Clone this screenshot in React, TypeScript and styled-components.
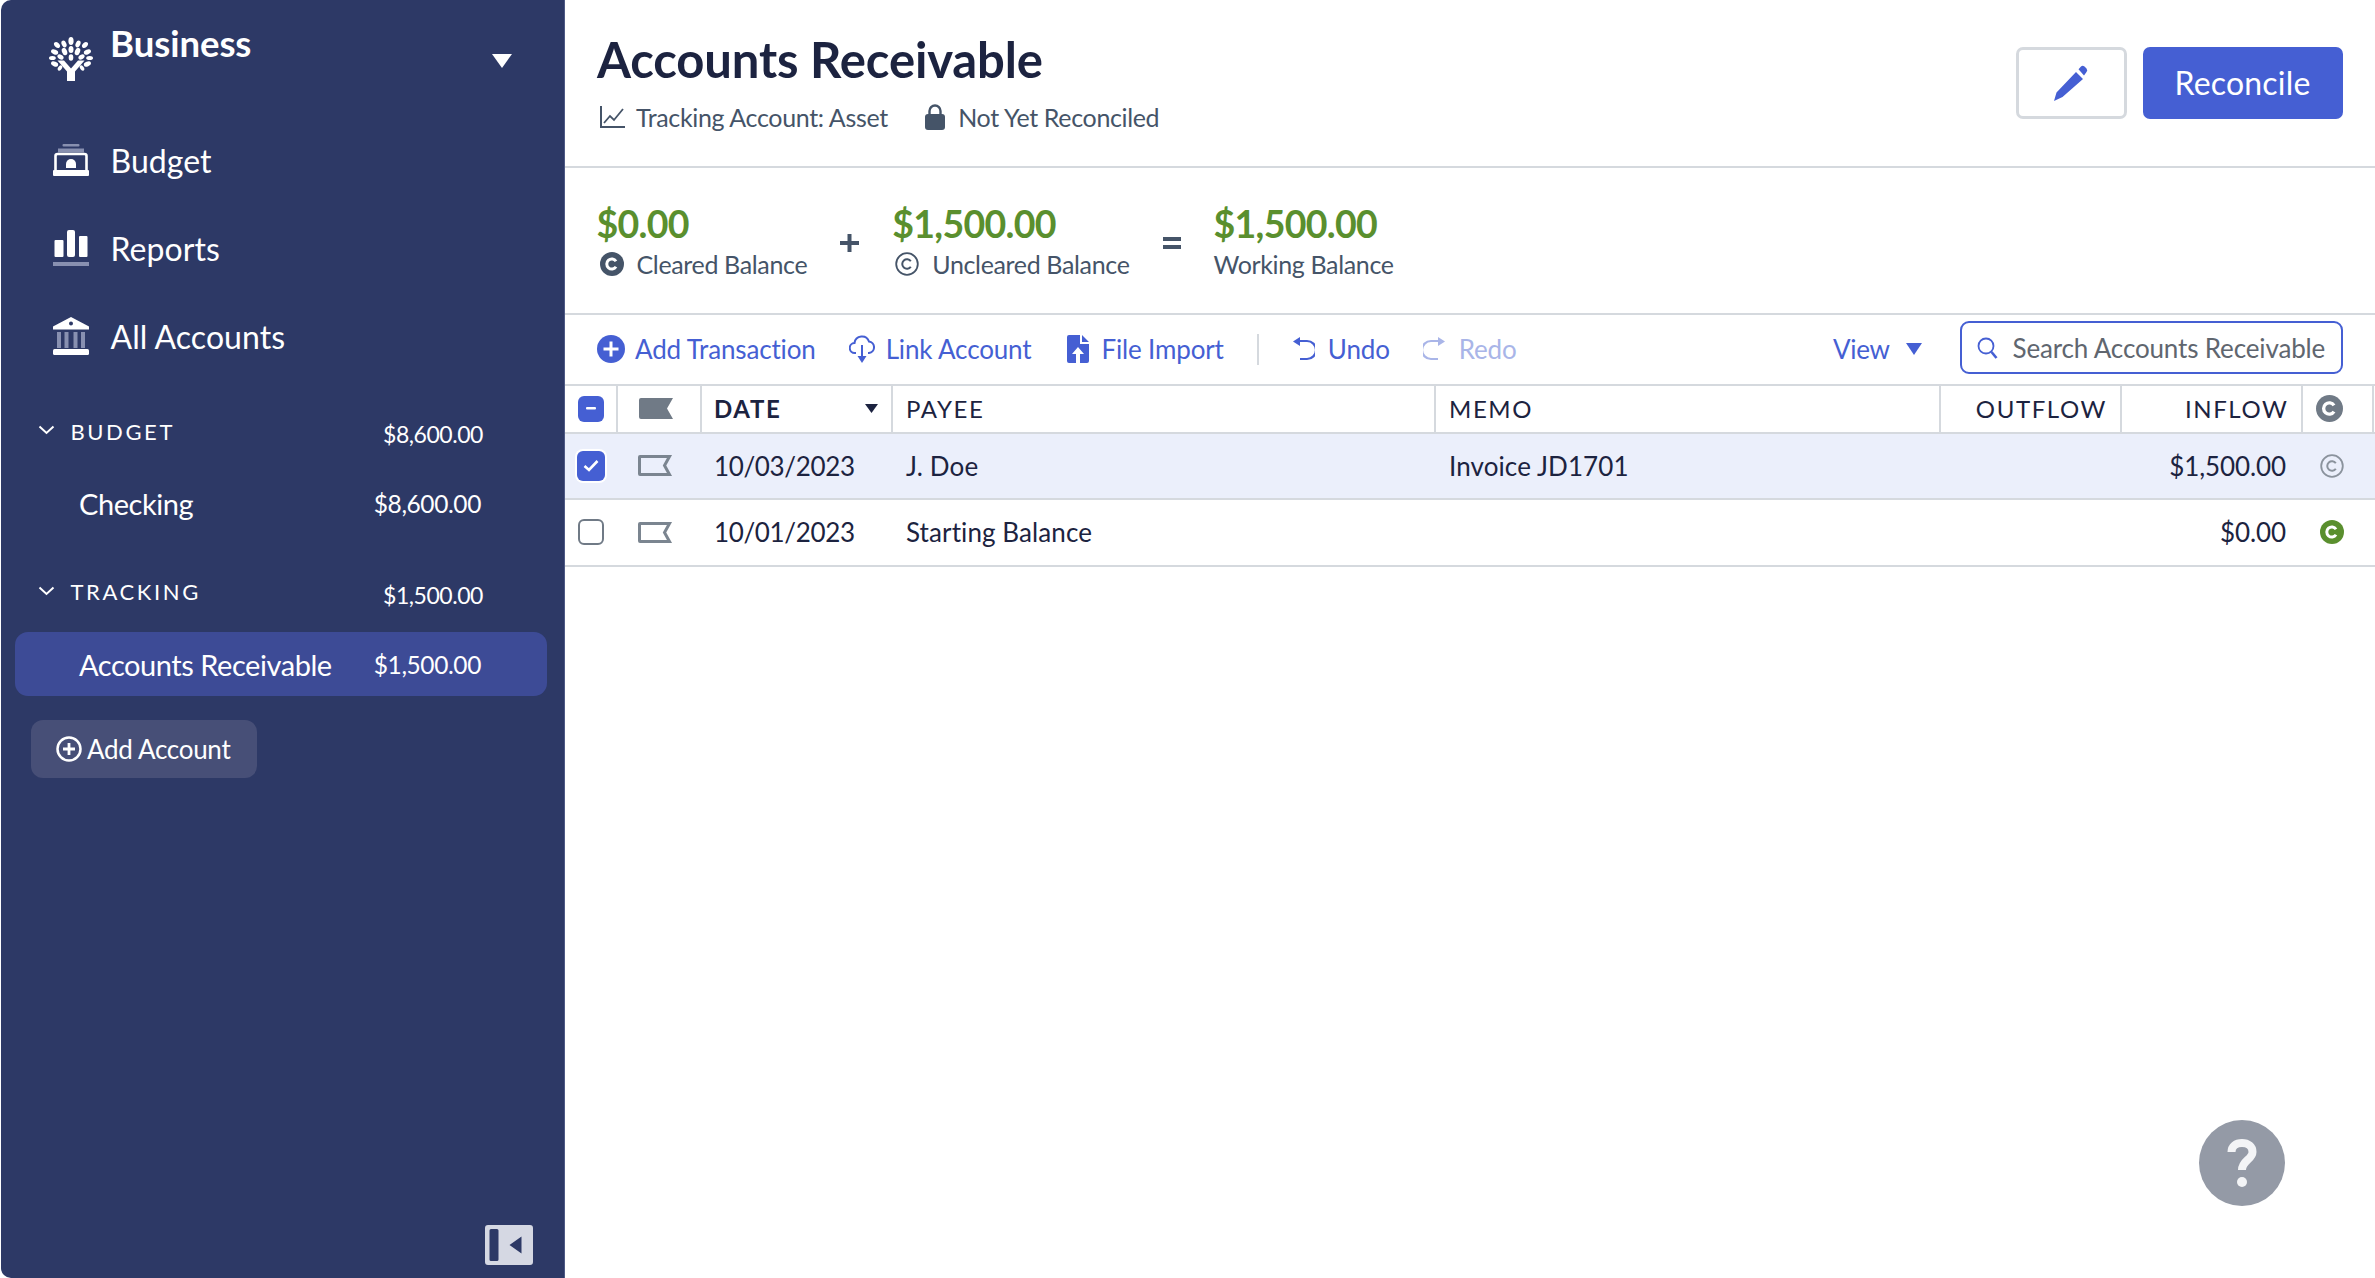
import React from "react";
import styled, { createGlobalStyle } from "styled-components";

const Global = createGlobalStyle`
  html, body { margin: 0; padding: 0; background: #fff; }
  body { font-family: "Lato", "Liberation Sans", sans-serif; color: #1c2340; }
  * { box-sizing: border-box; }
`;

const BLUE = "#455fd3";
const LINE = "#d5d9de";
const INK = "#1c2340";
const SLATE = "#455468";
const GREEN = "#5a8f2e";

const Page = styled.div`
  display: flex;
  width: 2375px;
  height: 1278px;
  overflow: hidden;
  position: relative;
  background: #fff;
`;

const Sidebar = styled.aside`
  width: 564px;
  margin-left: 1px;
  flex: none;
  display: flex;
  flex-direction: column;
  background: #2d3966;
  border-right: 1px solid #4f5a85;
  border-radius: 10px 0 0 10px;
  color: #fff;
`;

const Brand = styled.div`
  display: flex;
  height: 116px;
  padding: 37px 52px 0 48px;
`;
const BrandName = styled.div`
  margin-left: 17px;
  margin-top: -16px;
  font-size: 36.5px;
  font-weight: 700;
  line-height: 44px;
  letter-spacing: -0.05px;
`;
const BrandCaret = styled.svg`
  margin-left: auto;
  margin-top: 17px;
`;
const NavItem = styled.div`
  display: flex;
  align-items: center;
  height: 88px;
  padding-left: 52px;
  gap: 21.5px;
  font-size: 32px;
  letter-spacing: 0.05px;
`;
const GroupHead = styled.div<{ $top: number }>`
  display: flex;
  align-items: center;
  height: 48px;
  margin-top: ${(p) => p.$top}px;
  padding: 0 81px 0 37px;
`;
const GroupChevron = styled.svg`
  margin-top: -6px;
`;
const GroupLabel = styled.span`
  margin-left: 15.5px;
  margin-top: -4px;
  font-size: 22px;
  letter-spacing: 2.6px;
`;
const GroupAmount = styled.span`
  margin-left: auto;
  margin-top: 2px;
  font-size: 23px;
  letter-spacing: -0.45px;
`;
const AccountRow = styled.div<{ $active?: boolean }>`
  display: flex;
  align-items: center;
  justify-content: space-between;
  height: 64px;
  margin: 14.5px 17px 0 14px;
  padding: 0 66px 0 64px;
  border-radius: 13px;
  background: ${(p) => (p.$active ? "#3d4b96" : "transparent")};
  font-size: 29px;
  letter-spacing: -0.45px;
`;
const AccountAmount = styled.span`
  font-size: 24.5px;
  letter-spacing: -0.4px;
`;
const AddAccount = styled.button`
  display: flex;
  align-items: center;
  gap: 5px;
  align-self: flex-start;
  width: 226px;
  height: 58px;
  margin: 24px 0 0 30px;
  padding: 0 0 0 25px;
  border: 0;
  border-radius: 12px;
  background: #474f77;
  color: #fff;
  font-family: inherit;
  font-size: 26px;
  letter-spacing: -0.3px;
`;
const Collapse = styled.svg`
  margin-top: auto;
  margin-bottom: 13px;
  margin-right: 31.5px;
  align-self: flex-end;
`;

const Main = styled.main`
  flex: 1;
  min-width: 0;
  display: flex;
  flex-direction: column;
`;
const Header = styled.header`
  display: flex;
  justify-content: space-between;
  height: 168px;
  padding: 0 32.5px 0 32px;
  border-bottom: 2px solid ${LINE};
`;
const Title = styled.h1`
  margin: 30px 0 0;
  font-size: 49px;
  line-height: 58px;
  font-weight: 700;
  letter-spacing: -0.15px;
  color: ${INK};
`;
const Meta = styled.div`
  display: flex;
  align-items: center;
  margin-top: 14px;
  padding-left: 3px;
  color: ${SLATE};
  font-size: 25px;
  letter-spacing: -0.35px;
`;
const MetaItem = styled.span<{ $gap: number }>`
  display: flex;
  align-items: center;
  gap: ${(p) => p.$gap}px;
  margin-right: 37.5px;
`;
const HeaderActions = styled.div`
  display: flex;
  gap: 16px;
  padding-top: 47px;
`;
const EditButton = styled.button`
  display: flex;
  align-items: center;
  justify-content: center;
  width: 111px;
  height: 72px;
  background: #fff;
  border: 3.5px solid ${LINE};
  border-radius: 7px;
`;
const ReconcileButton = styled.button`
  width: 200px;
  height: 72px;
  padding: 0 0 2px;
  border: 0;
  border-radius: 7px;
  background: ${BLUE};
  color: #fff;
  font-family: inherit;
  font-size: 32px;
  letter-spacing: 0.2px;
`;

const Balances = styled.section`
  display: flex;
  align-items: flex-start;
  height: 147px;
  padding: 32.5px 0 0 31.500px;
  border-bottom: 2px solid ${LINE};
`;
const Balance = styled.div`
  display: flex;
  flex-direction: column;
`;
const Amount = styled.div`
  font-size: 37.5px;
  line-height: 46px;
  font-weight: 700;
  letter-spacing: -0.7px;
  color: ${GREEN};
`;
const BalanceLabel = styled.div`
  display: flex;
  align-items: center;
  gap: 13px;
  margin-top: 2.5px;
  font-size: 25px;
  line-height: 30px;
  letter-spacing: -0.35px;
  color: ${SLATE};
`;
const LabelIcon = styled.span`
  display: flex;
  margin-left: 3px;
`;
const Operator = styled.svg`
  margin: 33px 33px 0 33px;
`;

const Toolbar = styled.section`
  display: flex;
  align-items: center;
  height: 68.5px;
  padding: 0 32.5px 0 32px;
  color: ${BLUE};
  font-size: 26px;
  letter-spacing: -0.15px;
`;
const ToolItem = styled.span<{ $gap: number; $off?: boolean; $after: number }>`
  display: flex;
  align-items: center;
  gap: ${(p) => p.$gap}px;
  margin-right: ${(p) => p.$after}px;
  color: ${(p) => (p.$off ? "#a9b5e8" : BLUE)};
`;
const ToolDivider = styled.span`
  width: 2px;
  height: 31px;
  margin-right: 32px;
  background: ${LINE};
`;
const ViewMenu = styled.span`
  display: flex;
  align-items: center;
  gap: 16px;
  margin-left: auto;
  margin-right: 38px;
  letter-spacing: -0.35px;
`;
const SearchBox = styled.div`
  display: flex;
  align-items: center;
  gap: 15px;
  width: 383px;
  height: 53px;
  margin-top: -3px;
  padding-left: 15px;
  border: 2px solid ${BLUE};
  border-radius: 9px;
  font-size: 26px;
  letter-spacing: -0.15px;
  color: #60666f;
  white-space: nowrap;
`;

const columns = "53px 84px 191px 543px 505px 180.5px 181.5px 71px 1px";
const Row = styled.div<{ $selected?: boolean; $head?: boolean }>`
  display: grid;
  grid-template-columns: ${columns};
  height: ${(p) => (p.$head ? 50 : 66.5)}px;
  border-top: ${(p) => (p.$head ? `2px solid ${LINE}` : "0")};
  border-bottom: 2px solid ${LINE};
  background: ${(p) => (p.$selected ? "#ebeffb" : "#fff")};
`;
const HeadCell = styled.div<{ $right?: boolean; $bold?: boolean; $iconAt?: number }>`
  display: flex;
  align-items: center;
  justify-content: ${(p) => (p.$right ? "flex-end" : "flex-start")};
  padding: ${(p) => (p.$right ? "0 12.5px 0 0" : p.$iconAt !== undefined ? `0 0 0 ${p.$iconAt}px` : p.$bold ? "0 13px 0 12px" : "0 13px")};
  border-right: 2px solid ${LINE};
  font-size: 24px;
  font-weight: ${(p) => (p.$bold ? 700 : 400)};
  letter-spacing: 1.6px;
  color: ${INK};
`;
const Cell = styled.div<{ $right?: boolean; $iconAt?: number; $date?: boolean }>`
  display: flex;
  align-items: center;
  justify-content: ${(p) => (p.$right ? "flex-end" : "flex-start")};
  padding: ${(p) => (p.$right ? "0 17px 0 0" : p.$iconAt !== undefined ? `0 0 0 ${p.$iconAt}px` : p.$date ? "0 12px" : "0 13px")};
  font-size: 26px;
  letter-spacing: ${(p) => (p.$date ? "-0.35px" : p.$right ? "-0.1px" : "0.1px")};
  color: ${INK};
`;
const DateSort = styled.svg`
  margin-left: auto;
`;
const CheckBox = styled.span<{ $on?: boolean; $head?: boolean }>`
  display: flex;
  align-items: center;
  justify-content: center;
  width: ${(p) => (p.$on && !p.$head ? 28 : 26)}px;
  height: ${(p) => (p.$on && !p.$head ? 30 : 26)}px;
  margin-left: ${(p) => (p.$on && !p.$head ? -1 : 0)}px;
  border-radius: 6px;
  background: ${(p) => (p.$on ? BLUE : "#fff")};
  border: ${(p) => (p.$on ? "0" : "2px solid #707a86")};
  box-shadow: ${(p) => (p.$on && !p.$head ? "0 0 0 2px #fff" : "none")};
`;
const Help = styled.div`
  position: absolute;
  left: 2199px;
  top: 1120px;
  display: flex;
  align-items: center;
  justify-content: center;
  width: 86px;
  height: 86px;
  border-radius: 50%;
  background: #949aa6;
`;

const Logo = () => {
  const leaves: [number, number, number, number, number][] = [
    [22, 4, 2.6, 4, 0], [15, 7, 2.3, 3.5, -25], [29, 7, 2.3, 3.5, 25], [8, 8, 2.3, 3.5, -45], [36, 8, 2.3, 3.5, 45],
    [5.6, 15, 2.4, 3.7, -68], [38.4, 15, 2.4, 3.7, 68], [3.4, 21, 2.1, 3.4, 90], [40.6, 21, 2.1, 3.4, 90],
    [5.6, 27, 2.3, 3.7, 112], [38.4, 27, 2.3, 3.7, 68], [11, 31, 1.9, 2.9, 35], [33, 31, 1.9, 2.9, -35],
    [22, 12.5, 2.5, 3.5, 0], [15.5, 14.5, 2.5, 3.9, -22], [28.5, 14.5, 2.5, 3.9, 22], [11.5, 20, 2.2, 3.3, -60],
    [32.5, 20, 2.2, 3.3, 60], [22, 20.5, 2.3, 3.3, 0],
  ];
  return (
    <svg width="44" height="44" viewBox="0 0 44 44" fill="#fff" aria-hidden>
      {leaves.map(([x, y, rx, ry, r], i) => (
        <ellipse key={i} cx={x} cy={y} rx={rx} ry={ry} transform={`rotate(${r} ${x} ${y})`} />
      ))}
      <path d="M8.500 23.500h6.500l7 8 7-8h6.500l-9.500 11V44h-8v-9.500z" />
    </svg>
  );
};

const BudgetIcon = () => (
  <svg width="36" height="32" viewBox="0 0 36 32" fill="none" aria-hidden>
    <rect x="9.500" width="17" height="2.500" rx="1" fill="#8890b0" />
    <rect x="5" y="4.500" width="26" height="4" fill="#8890b0" />
    <path d="M2.500 26v-14q0-2 2-2h27q2 0 2 2v14" stroke="#fff" strokeWidth="2.600" />
    <path d="M13 24v-4a5 5 0 0 1 10 0v4z" fill="#fff" />
    <rect y="26" width="36" height="6" rx="1" fill="#fff" />
  </svg>
);
const ReportsIcon = () => (
  <svg width="36" height="36" viewBox="0 0 36 36" aria-hidden>
    <rect x="1.500" y="10" width="9" height="17" rx="1" fill="#fff" />
    <rect x="14" width="8" height="27" rx="2" fill="#fff" />
    <rect x="26" y="6" width="8.500" height="21" rx="1" fill="#fff" />
    <rect y="32" width="36" height="4" fill="#8890b0" />
  </svg>
);
const BankIcon = () => (
  <svg width="36" height="38" viewBox="0 0 36 38" aria-hidden>
    <path fillRule="evenodd" d="M18 0 36 9.500v3H0v-3zM18 4.500a2 2 0 1 0 0 4 2 2 0 0 0 0-4z" fill="#fff" />
    <path d="M4 15h4v16H4zM11.500 15h4v16h-4zM20.500 15h4v16h-4zM28 15h4v16h-4z" fill="#8890b0" />
    <rect y="32" width="36" height="6" rx="1.500" fill="#fff" />
  </svg>
);
const Chevron = () => (
  <GroupChevron width="17" height="10" viewBox="0 0 17 10" fill="none" aria-hidden>
    <path d="M1.500 1.500 8.500 8l7-6.500" stroke="#fff" strokeWidth="2" />
  </GroupChevron>
);
const Cleared = ({ color, size }: { color: string; size: number }) => (
  <svg width={size} height={size} viewBox="0 0 24 24" aria-hidden>
    <circle cx="12" cy="12" r="12" fill={color} />
    <path d="M16 9.300a5 5 0 1 0 0 5.400" fill="none" stroke="#fff" strokeWidth="3" />
  </svg>
);
const Uncleared = ({ color, size }: { color: string; size: number }) => (
  <svg width={size} height={size} viewBox="0 0 24 24" aria-hidden>
    <circle cx="12" cy="12" r="10.800" fill="none" stroke={color} strokeWidth="1.800" />
    <path d="M15.800 9.300a4.700 4.700 0 1 0 0 5.400" fill="none" stroke={color} strokeWidth="2" />
  </svg>
);
const FlagShape = ({ filled }: { filled?: boolean }) =>
  filled ? (
    <svg width="34" height="21" viewBox="0 0 34 21" aria-hidden>
      <path d="M2 0h32l-6 10.500 6 10.500H2q-2 0-2-2V2q0-2 2-2z" fill="#707a86" />
    </svg>
  ) : (
    <svg width="35" height="21" viewBox="0 0 35 21" aria-hidden>
      <path d="M2 1.500h29.500l-5 9 5 9H2q-.5 0-.5-.5V2q0-.5.5-.5z" fill="none" stroke="#7b8590" strokeWidth="3" />
    </svg>
  );

const rows = [
  { date: "10/03/2023", payee: "J. Doe", memo: "Invoice JD1701", inflow: "$1,500.00", selected: true },
  { date: "10/01/2023", payee: "Starting Balance", memo: "", inflow: "$0.00", selected: false },
];

export default function App() {
  return (
    <Page>
      <Global />
      <Sidebar>
        <Brand>
          <Logo />
          <BrandName>Business</BrandName>
          <BrandCaret width="20" height="14" viewBox="0 0 20 14" aria-hidden>
            <path d="M0 0h20L10 14z" fill="#fff" />
          </BrandCaret>
        </Brand>
        <NavItem><BudgetIcon />Budget</NavItem>
        <NavItem><ReportsIcon />Reports</NavItem>
        <NavItem><BankIcon />All Accounts</NavItem>
        <GroupHead $top={29}>
          <Chevron />
          <GroupLabel>BUDGET</GroupLabel>
          <GroupAmount>$8,600.00</GroupAmount>
        </GroupHead>
        <AccountRow>
          <span>Checking</span>
          <AccountAmount>$8,600.00</AccountAmount>
        </AccountRow>
        <GroupHead $top={34}>
          <Chevron />
          <GroupLabel>TRACKING</GroupLabel>
          <GroupAmount>$1,500.00</GroupAmount>
        </GroupHead>
        <AccountRow $active>
          <span>Accounts Receivable</span>
          <AccountAmount>$1,500.00</AccountAmount>
        </AccountRow>
        <AddAccount>
          <svg width="26" height="26" viewBox="0 0 26 26" fill="none" aria-hidden>
            <circle cx="13" cy="13" r="11.500" stroke="#fff" strokeWidth="2.500" />
            <path d="M13 7v12M7 13h12" stroke="#fff" strokeWidth="2.800" />
          </svg>
          Add Account
        </AddAccount>
        <Collapse width="48" height="40" viewBox="0 0 48 40" aria-hidden>
          <path fillRule="evenodd" fill="#d5d8e3" d="M3 0h42q3 0 3 3v34q0 3-3 3H3q-3 0-3-3V3q0-3 3-3zM6 4q-1.500 0-1.500 1.500v29Q4.500 36 6 36h6q1.500 0 1.500-1.500v-29Q13.500 4 12 4zM24.500 20l12 8.500v-17z" />
        </Collapse>
      </Sidebar>
      <Main>
        <Header>
          <div>
            <Title>Accounts Receivable</Title>
            <Meta>
              <MetaItem $gap={11}>
                <svg width="25" height="24" viewBox="0 0 25 24" fill="none" aria-hidden>
                  <path d="M1 1v21h24" stroke={SLATE} strokeWidth="2" />
                  <path d="M4 18l6-7 4 4 9-11" stroke={SLATE} strokeWidth="1.800" />
                </svg>
                Tracking Account: Asset
              </MetaItem>
              <MetaItem $gap={13}>
                <svg width="20" height="26" viewBox="0 0 20 26" fill="none" aria-hidden>
                  <path d="M4.500 12V7a5.500 5.500 0 0 1 11 0v5" stroke={SLATE} strokeWidth="2.400" />
                  <rect y="10" width="20" height="16" rx="3" fill={SLATE} />
                </svg>
                Not Yet Reconciled
              </MetaItem>
            </Meta>
          </div>
          <HeaderActions>
            <EditButton aria-label="Edit">
              <svg width="34" height="36" viewBox="0 0 34 36" aria-hidden>
                <path d="M22 7 29 14 8.500 32 0 36l2.500-8.500zM24.500 4.200 27 1.500q1.500-1.500 3.500 0l2 2q1.500 2 0 3.500L30 10.500z" fill={BLUE} />
              </svg>
            </EditButton>
            <ReconcileButton>Reconcile</ReconcileButton>
          </HeaderActions>
        </Header>
        <Balances>
          <Balance>
            <Amount>$0.00</Amount>
            <BalanceLabel><LabelIcon><Cleared color={SLATE} size={24} /></LabelIcon>Cleared Balance</BalanceLabel>
          </Balance>
          <Operator width="19" height="18" viewBox="0 0 19 18" aria-hidden>
            <path d="M7.500 0h4v7h7.500v4h-7.500v7h-4v-7H0V7h7.500z" fill={SLATE} />
          </Operator>
          <Balance>
            <Amount>$1,500.00</Amount>
            <BalanceLabel><LabelIcon><Uncleared color={SLATE} size={24} /></LabelIcon>Uncleared Balance</BalanceLabel>
          </Balance>
          <Operator width="18" height="18" viewBox="0 0 18 18" aria-hidden>
            <path d="M0 3h18v4H0zM0 11h18v4H0z" fill={SLATE} />
          </Operator>
          <Balance>
            <Amount>$1,500.00</Amount>
            <BalanceLabel>Working Balance</BalanceLabel>
          </Balance>
        </Balances>
        <Toolbar>
          <ToolItem $gap={10} $after={33}>
            <svg width="28" height="28" viewBox="0 0 28 28" aria-hidden>
              <circle cx="14" cy="14" r="14" fill={BLUE} />
              <path d="M14 6.500v15M6.500 14h15" stroke="#fff" strokeWidth="3" />
            </svg>
            Add Transaction
          </ToolItem>
          <ToolItem $gap={11} $after={36}>
            <svg width="26" height="28" viewBox="0 0 26 28" fill="none" aria-hidden>
              <path d="M7 18H6a5 5 0 0 1-.5-10A7.500 7.500 0 0 1 20 6.500a5.800 5.800 0 0 1 0 11.500h-1" stroke={BLUE} strokeWidth="2" />
              <path d="M13 10v13" stroke={BLUE} strokeWidth="2" />
              <path d="M8.500 21h9L13 28z" fill={BLUE} />
            </svg>
            Link Account
          </ToolItem>
          <ToolItem $gap={12} $after={33}>
            <svg width="22" height="28" viewBox="0 0 22 28" aria-hidden>
              <path fillRule="evenodd" d="M2 0h11v9h9v17q0 2-2 2H2q-2 0-2-2V2q0-2 2-2zM15 0l7 7h-7zM11 12l-6 7h4v9h4v-9h4z" fill={BLUE} />
            </svg>
            File Import
          </ToolItem>
          <ToolDivider />
          <ToolItem $gap={13} $after={33}>
            <svg width="24" height="24" viewBox="0 0 24 24" fill="none" aria-hidden>
              <path d="M7 4h9a6.500 6.500 0 0 1 0 18H9" stroke={BLUE} strokeWidth="2.200" />
              <path d="M9 0v9L2 4.500z" fill={BLUE} />
            </svg>
            Undo
          </ToolItem>
          <ToolItem $gap={12} $after={0} $off>
            <svg width="24" height="24" viewBox="0 0 24 24" fill="none" aria-hidden>
              <path d="M17 4H8a6.500 6.500 0 0 0 0 18h7" stroke="#a9b5e8" strokeWidth="2.200" />
              <path d="M15 0v9l7-4.500z" fill="#a9b5e8" />
            </svg>
            Redo
          </ToolItem>
          <ViewMenu>
            View
            <svg width="16" height="12" viewBox="0 0 16 12" aria-hidden>
              <path d="M0 0h16L8 12z" fill={BLUE} />
            </svg>
          </ViewMenu>
          <SearchBox>
            <svg width="21" height="22" viewBox="0 0 21 22" fill="none" aria-hidden>
              <circle cx="9" cy="9" r="7.500" stroke={BLUE} strokeWidth="1.800" />
              <path d="M14.500 15l5 6" stroke={BLUE} strokeWidth="2.600" />
            </svg>
            Search Accounts Receivable
          </SearchBox>
        </Toolbar>
        <Row $head>
          <HeadCell $iconAt={13}><CheckBox $on $head>
            <svg width="10" height="3" viewBox="0 0 10 3" aria-hidden><rect width="10" height="2.500" rx="1" fill="#fff" /></svg>
          </CheckBox></HeadCell>
          <HeadCell $iconAt={21}><FlagShape filled /></HeadCell>
          <HeadCell $bold>
            DATE
            <DateSort width="13" height="9" viewBox="0 0 13 9" aria-hidden><path d="M0 0h13L6.500 9z" fill={INK} /></DateSort>
          </HeadCell>
          <HeadCell>PAYEE</HeadCell>
          <HeadCell>MEMO</HeadCell>
          <HeadCell $right>OUTFLOW</HeadCell>
          <HeadCell $right>INFLOW</HeadCell>
          <HeadCell $iconAt={13}><Cleared color="#707a86" size={27} /></HeadCell>
        </Row>
        {rows.map((r) => (
          <Row key={r.date} $selected={r.selected}>
            <Cell $iconAt={13}>
              <CheckBox $on={r.selected}>
                {r.selected && (
                  <svg width="16" height="13" viewBox="0 0 16 13" fill="none" aria-hidden>
                    <path d="M1.500 7 6 11 14.500 2" stroke="#fff" strokeWidth="2.600" />
                  </svg>
                )}
              </CheckBox>
            </Cell>
            <Cell $iconAt={20}><FlagShape /></Cell>
            <Cell $date>{r.date}</Cell>
            <Cell>{r.payee}</Cell>
            <Cell>{r.memo}</Cell>
            <Cell $right />
            <Cell $right>{r.inflow}</Cell>
            <Cell $iconAt={17}>
              {r.selected ? <Uncleared color="#8b939d" size={24} /> : <Cleared color={GREEN} size={24} />}
            </Cell>
          </Row>
        ))}
      </Main>
      <Help>
        <svg width="30" height="48" viewBox="0 0 30 48" fill="none" aria-hidden>
          <path d="M4.500 13C4.500 7 9 4 15 4s10.500 3.500 10.500 9c0 7.500-10.500 8.500-10.500 18" stroke="#f3f4f6" strokeWidth="8" />
          <circle cx="15" cy="43" r="5" fill="#f3f4f6" />
        </svg>
      </Help>
    </Page>
  );
}
